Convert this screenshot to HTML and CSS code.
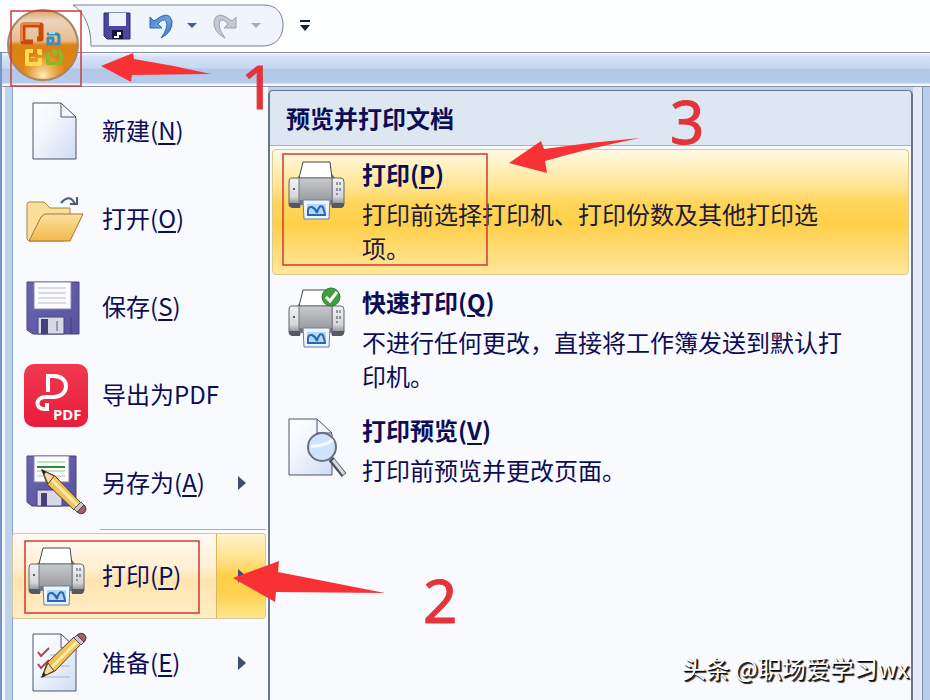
FILE: index.html
```html
<!DOCTYPE html>
<html lang="zh-CN">
<head>
<meta charset="utf-8">
<title>打印菜单</title>
<link rel="stylesheet" href="styles.css">
</head>
<body>
<svg class="defs" aria-hidden="true">
  <defs>
    <linearGradient id="orb" x1="0" y1="0" x2="0" y2="1">
      <stop offset="0" stop-color="#d9a068"/><stop offset=".15" stop-color="#ecd4ba"/><stop offset=".44" stop-color="#e8bd8c"/><stop offset=".5" stop-color="#db8218"/><stop offset=".8" stop-color="#dd8412"/><stop offset="1" stop-color="#c8761c"/>
    </linearGradient>
    <radialGradient id="glow" cx=".5" cy=".95" r=".35">
      <stop offset="0" stop-color="#ffeec0"/><stop offset="1" stop-color="#ffc860" stop-opacity="0"/>
    </radialGradient>
    <linearGradient id="paper" x1="0" y1="0" x2="1" y2="1">
      <stop offset="0" stop-color="#fff"/><stop offset=".4" stop-color="#f2f6fd"/><stop offset="1" stop-color="#cfdcf4"/>
    </linearGradient>
    <linearGradient id="purple" x1="0" y1="0" x2="1" y2="1">
      <stop offset="0" stop-color="#6a66ae"/><stop offset="1" stop-color="#5852a0"/>
    </linearGradient>
    <linearGradient id="gray" x1="0" y1="0" x2="0" y2="1">
      <stop offset="0" stop-color="#c9cacc"/><stop offset=".5" stop-color="#b0b1b4"/><stop offset="1" stop-color="#98999d"/>
    </linearGradient>
    <linearGradient id="side" x1="0" y1="0" x2="0" y2="1">
      <stop offset="0" stop-color="#f4f4f6"/><stop offset=".65" stop-color="#d4d5da"/><stop offset="1" stop-color="#707278"/>
    </linearGradient>
    <linearGradient id="folder" x1="0" y1="0" x2="0" y2="1">
      <stop offset="0" stop-color="#fce2a0"/><stop offset="1" stop-color="#f2b84a"/>
    </linearGradient>
    <linearGradient id="pdf" x1="0" y1="0" x2="0" y2="1">
      <stop offset="0" stop-color="#f03a50"/><stop offset="1" stop-color="#e81c3c"/>
    </linearGradient>
    <linearGradient id="undo" x1="0" y1="0" x2="1" y2="1">
      <stop offset="0" stop-color="#3f7fd0"/><stop offset=".5" stop-color="#6fa4e2"/><stop offset="1" stop-color="#3a68b0"/>
    </linearGradient>
    <symbol id="printer" viewBox="0 0 64 64">
      <path d="M12 21 18 15H47L52 21Z" fill="#6c6e74"/>
      <path d="M19 4H46L48 20H15Z" fill="#fff" stroke="#454750"/>
      <path d="M7 20H16V49H7Q5 49 5 46V24Q5 20 7 20Z" fill="url(#side)" stroke="#62646c"/>
      <path d="M48 20H57Q60 20 60 24V46Q60 49 57 49H48Z" fill="url(#side)" stroke="#62646c"/>
      <rect x="15" y="20" width="33" height="24" fill="url(#gray)" stroke="#77797f"/>
      <path d="M15 42H49V47H15Z" fill="#74767d"/>
      <path d="M5 45H16V50H8Q5 49 5 45ZM48 45H60Q60 50 57 50H48Z" fill="#565962"/>
      <circle cx="10" cy="31" r="1" fill="#333"/>
      <path d="M53 24V27M53 30V33M53 35V37M56 24V27M56 30V33" stroke="#44464e"/>
      <path d="M19 42H46L45 61H20Z" fill="#eef5fd" stroke="#6680a4"/>
      <path d="M23 46H42V57H23Z" fill="#b5d6f6"/>
      <path d="M24 56Q23 48 28 49 32 51 33 55 35 46 39 49L41 56M23 57H42" fill="none" stroke="#2867b2" stroke-width="2"/>
    </symbol>
    <symbol id="pencil" viewBox="0 0 64 64">
      <path d="M18 19 31 25 57 52 50 59 23 33Z" fill="#f2c35a" stroke="#573d1c"/>
      <path d="M26 27 53 54" stroke="#ffe9a8" stroke-width="3"/>
      <path d="M18 19 30 25 24 33Z" fill="#f5dcae" stroke="#573d1c"/>
      <path d="M17 18 22 21 20 24Z" fill="#222"/>
      <path d="M50 58 57 51 60 54 53 61Z" fill="#c8c8d0" stroke="#555"/>
      <path d="M53 61 60 54Q64 58 60 62 56 64 53 61Z" fill="#a85f6a" stroke="#5a2c34"/>
    </symbol>
  </defs>
</svg>

<header class="titlebar">
  <button class="orb" aria-label="Office 按钮">
    <svg viewBox="0 0 74 74" width="74" height="74">
      <circle cx="37" cy="37" r="35" fill="url(#orb)" stroke="#a98560" stroke-width="2"/>
      <circle cx="37" cy="37" r="34" fill="url(#glow)"/>
      <g fill="none" stroke-linejoin="round">
        <path d="M27 34H17V17H35V31H31" stroke="#cc4a10" stroke-width="5"/>
        <path d="M16 33V16H34" stroke="#f08440" stroke-width="2"/>
        <path d="M41 26H50Q53 26 53 29V36H49M48 30H42V36H47V30" stroke="#3a8cc0" stroke-width="3"/>
        <path d="M43 25H49" stroke="#a8dcf0" stroke-width="2"/>
        <path d="M27 43H21V56H34V50M31 43H34V47M27 49V50" stroke="#ffdc50" stroke-width="4"/>
        <path d="M42 44V55H53M41 55H52Q55 55 55 52V45M46 43H49V48M52 43H55" stroke="#8cb828" stroke-width="4"/>
      </g>
    </svg>
  </button>
  <nav class="quick" aria-label="快速访问工具栏">
    <svg class="quick-shape" viewBox="0 0 214 44" width="214" height="44" aria-hidden="true">
      <path d="M1 1H192C205 1 211 10 211 21S205 42 190 42H19C19 24 13 9 1 1Z" fill="#f0f4fc" stroke="#77808f"/>
    </svg>
    <button class="tool" aria-label="保存">
      <svg viewBox="0 0 28 28" width="28" height="28"><path d="M1 1H27V27H4L1 24Z" fill="#4a47a4" stroke="#2c2a70"/><path d="M6 1H23V14H6Z" fill="#eef3ff"/><path d="M9 18H20V27H9Z" fill="#16163c"/><path d="M14 20H18V23H16V26H11V24H14Z" fill="#fff"/></svg>
    </button>
    <button class="tool" aria-label="撤消">
      <svg viewBox="0 0 28 28" width="28" height="28"><path d="M3 5V16H15L11 12Q16 6 19 9 22 15 14 26 26 20 25 9 22-3 7 9Z" fill="url(#undo)" stroke="#3569ae"/></svg>
    </button>
    <button class="drop" aria-label="撤消列表"><svg viewBox="0 0 10 6" width="10" height="6"><path d="M0 0H10L5 5Z" fill="#3f5f98"/></svg></button>
    <button class="tool" aria-label="恢复">
      <svg viewBox="0 0 28 28" width="28" height="28"><path d="M25 5V16H13L17 12Q12 6 9 9 6 15 14 26 2 20 3 9 6-3 21 9Z" fill="#c0c9d6" stroke="#98a3b2"/></svg>
    </button>
    <button class="drop" aria-label="恢复列表"><svg viewBox="0 0 10 6" width="10" height="6"><path d="M0 0H10L5 5Z" fill="#a9b0bc"/></svg></button>
  </nav>
  <button class="customize" aria-label="自定义快速访问工具栏"><svg viewBox="0 0 12 14" width="12" height="14"><path d="M1 1H11V3H1ZM1 6H11L6 12Z" fill="#16203c"/></svg></button>
</header>

<main class="frame">
  <div class="ribbon"></div>
  <div class="columns">
    <nav class="menu" aria-label="文件菜单">
      <button class="item"><svg class="icon" viewBox="0 0 64 64"><path d="M9 4H37L52 19V60H9Z" fill="url(#paper)" stroke="#4b5468"/><path d="M37 4V18H52Z" fill="#f4f7fd" stroke="#4b5468"/></svg><span>新建(<u>N</u>)</span></button>
      <button class="item"><svg class="icon" viewBox="0 0 64 64"><path d="M3 52V17Q3 15 6 15H19Q21 15 22 17L26 21H46V48L40 54H5Z" fill="#fbdf98" stroke="#a98547"/><path d="M5 54 17 30 21 27H59L46 54Z" fill="url(#folder)" stroke="#a07530"/><path d="M37 16Q46 6 51 17M46 17H53V10" fill="none" stroke="#4a5a7c" stroke-width="2"/></svg><span>打开(<u>O</u>)</span></button>
      <button class="item"><svg class="icon" viewBox="0 0 64 64"><path d="M3 7H55V59H9L3 55Z" fill="url(#purple)" stroke="#47427c"/><path d="M10 7H47V34H10Z" fill="#fcfcff" stroke="#8886a8"/><path d="M14 13H42M14 18H42M14 23H42M14 28H42" stroke="#b9bac6"/><path d="M14 42H40V59H14Z" fill="#d9d9e6" stroke="#47427c"/><path d="M17 44H24V59H17Z" fill="#45407c"/><path d="M33 46V56" stroke="#9897b4" stroke-width="2"/><path d="M47 42V59" stroke="#45407c"/></svg><span>保存(<u>S</u>)</span></button>
      <button class="item"><svg class="icon" viewBox="0 0 64 64"><rect y="1" width="64" height="63" rx="10" fill="url(#pdf)"/><path d="M24 29V13H30C46 13 46 33 30 34H22C11 34 11 46 20 46H23V40" fill="none" stroke="#fff" stroke-width="4"/><text x="29" y="57" class="pdf-text">PDF</text></svg><span>导出为PDF</span></button>
      <button class="item"><svg class="icon" viewBox="0 0 64 64"><path d="M3 5H52V55H8L3 51Z" fill="url(#purple)" stroke="#47427c"/><path d="M10 5H45V31H10Z" fill="#fcfcff" stroke="#8886a8"/><path d="M13 11H41" stroke="#8cc48c"/><path d="M13 16H41" stroke="#278d36" stroke-width="2"/><path d="M13 20H41" stroke="#8cc48c"/><path d="M13 25H41" stroke="#b9bac6"/><path d="M13 39H38V55H13Z" fill="#d9d9e6" stroke="#47427c"/><path d="M17 42H23V55H17Z" fill="#45407c"/><use href="#pencil"/></svg><span>另存为(<u>A</u>)</span><i class="more"></i></button>
      <hr class="rule">
      <button class="item selected"><svg class="icon" viewBox="0 0 64 64"><use href="#printer"/></svg><span>打印(<u>P</u>)</span><i class="more"></i></button>
      <button class="item"><svg class="icon" viewBox="0 0 64 64"><path d="M9 3H37L52 18V60H9Z" fill="url(#paper)" stroke="#4b5468"/><path d="M37 3V17H52Z" fill="#f4f7fd" stroke="#4b5468"/><path d="M26 24H44M28 35H46M16 46H46" stroke="#a9b4cc"/><path d="M14 21 17 25 25 17M14 33 17 37 25 29" fill="none" stroke="#b54250" stroke-width="2"/><use href="#pencil" transform="matrix(1 0 0 -1 0 65)"/></svg><span>准备(<u>E</u>)</span><i class="more"></i></button>
    </nav>

    <section class="panel">
      <h1 class="panel-title">预览并打印文档</h1>
      <div class="choices">
        <button class="choice active">
          <svg class="icon" viewBox="0 0 64 64"><use href="#printer"/></svg>
          <span class="copy"><strong>打印(<u>P</u>)</strong><span>打印前选择打印机、打印份数及其他打印选项。</span></span>
        </button>
        <button class="choice">
          <svg class="icon" viewBox="0 0 64 64"><use href="#printer"/><circle cx="47" cy="11" r="9" fill="#3f9f40" stroke="#2b7a30"/><path d="M42 11 46 15 53 6" fill="none" stroke="#fff" stroke-width="3"/></svg>
          <span class="copy"><strong>快速打印(<u>Q</u>)</strong><span>不进行任何更改，直接将工作簿发送到默认打印机。</span></span>
        </button>
        <button class="choice">
          <svg class="icon" viewBox="0 0 64 64"><path d="M5 5H33L48 20V61H5Z" fill="url(#paper)" stroke="#4b5468"/><path d="M33 5V19H48Z" fill="#f4f7fd" stroke="#4b5468"/><path d="M47 45 60 61" stroke="#4c525e" stroke-width="6"/><path d="M49 46 60 60" stroke="#d5d9e2" stroke-width="3"/><circle cx="38" cy="33" r="14" fill="#cfe3fa" stroke="#667080" stroke-width="2"/><path d="M27 32Q38 33 49 26" fill="none" stroke="#f5faff" stroke-width="3"/></svg>
          <span class="copy"><strong>打印预览(<u>V</u>)</strong><span>打印前预览并更改页面。</span></span>
        </button>
      </div>
    </section>
    <div class="gutter"></div>
  </div>
</main>

<div class="notes">
  <svg viewBox="0 0 930 700" width="930" height="700" aria-hidden="true">
    <g fill="none" stroke="#d03a38" stroke-width="1.5">
      <path d="M11 11H81V86H11Z"/><path d="M25 541H199V613H25Z"/><path d="M283 154H487V265H283Z"/>
    </g>
    <g fill="#f83234">
      <path d="M101 66 133 53 134 59Q172 65 211 74L132 75 131 82Z"/>
      <path d="M233 578 279 561 278 572 385 593 276 592 275 602Z"/>
      <path d="M509 163 541 141 544 149Q592 142 640 138 590 148 545 161L547 173Z"/>
    </g>
  </svg>
  <span class="digit one">1</span>
  <span class="digit two">2</span>
  <span class="digit three">3</span>
</div>
<div class="credit">头条 @职场爱学习wx</div>
</body>
</html>
```
FILE: styles.css
```css
* { box-sizing: border-box; }

body {
  position: relative;
  display: flex;
  flex-direction: column;
  height: 100vh;
  margin: 0;
  overflow: hidden;
  background: #fdfefe;
  color: #0d0c55;
  font: 24px/34px "Noto Sans CJK SC", "Noto Sans", sans-serif;
}

button {
  margin: 0;
  padding: 0;
  border: 0;
  background: none;
  color: inherit;
  font: inherit;
  text-align: left;
}

svg { display: block; flex: none; }
u { text-underline-offset: 3px; text-decoration-thickness: 2px; }
.defs { position: absolute; width: 0; height: 0; }

.titlebar {
  position: relative;
  z-index: 1;
  display: flex;
  align-items: center;
  flex: none;
  height: 52px;
  padding-left: 72px;
  gap: 13px;
}

.orb { position: absolute; left: 6px; top: 8px; }

.quick {
  position: relative;
  display: flex;
  align-items: center;
  gap: 12px;
  width: 214px;
  height: 44px;
  padding-left: 31px;
}

.quick-shape { position: absolute; left: 0; top: 0; }
.tool, .drop { position: relative; }
.tool + .tool { margin-left: 4px; }
.drop { margin-right: 2px; }

.frame {
  display: flex;
  flex: 1;
  flex-direction: column;
  min-height: 0;
  border-top: 1px solid #8592a6;
  border-left: 2px solid #7896c4;
  background: #bcd0ec;
}

.ribbon {
  flex: none;
  height: 34px;
  border-bottom: 1px solid #8694ac;
  background: linear-gradient(#f2f6fd 0, #d4e1f6 4px, #c6d7f2 15px, #b3c8e8 16px, #b6cbec 30px, #f4f8fe 31px);
}

.columns {
  display: flex;
  flex: 1;
  min-height: 0;
  border-left: 3px solid #f4f8fe;
  border-right: 7px solid #b9cde9;
}

.menu {
  flex: none;
  width: 263px;
  padding-right: 2px;
  border-left: 7px solid #bdd2ec;
  background: #f8fafe;
  box-shadow: inset 1px 0 #8ba4c4;
}

.item {
  display: flex;
  align-items: center;
  gap: 14px;
  width: 100%;
  height: 88px;
  padding: 0 20px 0 12px;
}

.item span { padding-bottom: 2px; }

.icon { width: 64px; height: 64px; }
.pdf-text { fill: #fff; font: bold 15px "Noto Sans", sans-serif; }

.more {
  margin-left: auto;
  border: 7px solid transparent;
  border-left: 8px solid #404d70;
  border-right: 0;
}

.rule {
  height: 6px;
  margin: 0 0 0 88px;
  border: 0;
  background: linear-gradient(#f8fafe 2px, #a9aeb8 2px, #a9aeb8 3px, #f8fafe 3px);
}

.selected {
  height: 86px;
  border: 1px solid #d6c9a4;
  border-radius: 3px;
  padding: 0 19px 0 11px;
  background:
    linear-gradient(#d8b75e, #d8b75e) right 48px top / 1px 100% no-repeat,
    linear-gradient(#fff3c8 0, #ffe28a 30%, #ffcf48 50%, #ffd14c 70%, #ffe78c 100%) right / 48px 100% no-repeat,
    linear-gradient(#fffaf0 0, #ffefd4 40%, #ffe4b0 55%, #ffedc4 100%);
}

.panel {
  flex: 1;
  min-width: 0;
  margin-top: 3px;
  border: 2px solid #69758c;
  border-width: 1px 2px 0;
  border-radius: 5px 5px 0 0;
  background: #f8fafe;
}

.panel-title {
  margin: 0;
  padding: 10px 16px;
  border-bottom: 1px solid #a7b3c2;
  border-radius: 4px 4px 0 0;
  background: #dce7f2;
  font-size: 24px;
  line-height: 34px;
}

.choices {
  display: flex;
  flex-direction: column;
  gap: 2px;
  padding: 3px 2px 0;
}

.choice {
  display: flex;
  align-items: flex-start;
  gap: 14px;
  padding: 7px 56px 9px 11px;
  border: 1px solid transparent;
  border-radius: 4px;
}

.choice .icon { margin-top: 1px; }

.active {
  border-color: #dfc98c;
  color: #201a38;
  background: linear-gradient(#fffae6 0, #fff0bc 14%, #ffe490 30%, #ffd65c 42%, #ffd049 60%, #ffda70 78%, #ffe79c 100%);
}

.active strong { color: #0d0c55; }

.copy {
  display: flex;
  flex-direction: column;
  gap: 6px;
}

.gutter {
  flex: none;
  width: 10px;
  border-right: 1px solid #7f93b3;
  background: #e4eaf7;
}

.notes {
  position: absolute;
  left: 0;
  top: 0;
  z-index: 2;
  pointer-events: none;
}

.digit {
  position: absolute;
  color: #e2343a;
  font: 60px/60px "Noto Sans", sans-serif;
  -webkit-text-stroke: 1px #e2343a;
}

.one { left: 241px; top: 56px; }
.two { left: 423px; top: 570px; }
.three { left: 670px; top: 91px; }

.credit {
  position: absolute;
  right: 21px;
  bottom: 15px;
  z-index: 2;
  color: #fff;
  text-shadow: 1px 1px 1px #000, 2px 2px 1px #222;
}
```
